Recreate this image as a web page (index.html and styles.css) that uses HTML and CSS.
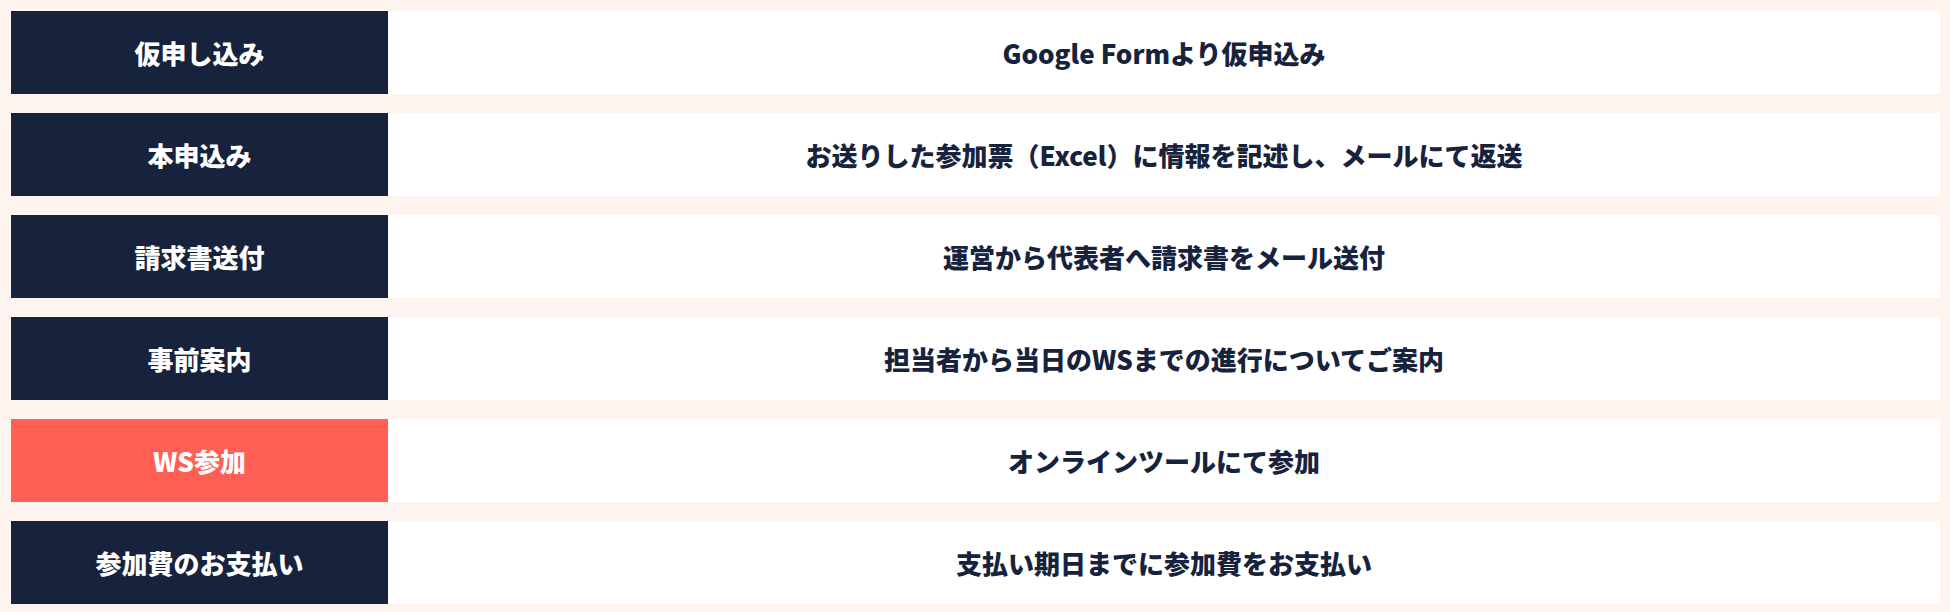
FILE: index.html
```html
<!DOCTYPE html>
<html lang="ja">
<head>
<meta charset="utf-8">
<title>参加の流れ</title>
<link rel="stylesheet" href="styles.css">
</head>
<body>
<div class="flow">
  <div class="row">
    <div class="label">仮申し込み</div>
    <div class="desc">Google Formより仮申込み</div>
  </div>
  <div class="row">
    <div class="label">本申込み</div>
    <div class="desc">お送りした参加票（Excel）に情報を記述し、メールにて返送</div>
  </div>
  <div class="row">
    <div class="label">請求書送付</div>
    <div class="desc">運営から代表者へ請求書をメール送付</div>
  </div>
  <div class="row">
    <div class="label">事前案内</div>
    <div class="desc">担当者から当日のWSまでの進行についてご案内</div>
  </div>
  <div class="row">
    <div class="label label-accent">WS参加</div>
    <div class="desc">オンラインツールにて参加</div>
  </div>
  <div class="row">
    <div class="label">参加費のお支払い</div>
    <div class="desc">支払い期日までに参加費をお支払い</div>
  </div>
</div>
</body>
</html>
```

FILE: styles.css
```css
html, body {
  margin: 0;
  padding: 0;
}
body {
  background: #fef4ef;
  font-family: "Noto Sans CJK JP", "Noto Sans", sans-serif;
  font-weight: 900;
  font-size: 26px;
  color: #17233d;
}
.flow {
  display: flex;
  flex-direction: column;
  gap: 19px;
  padding: 11px 10px 0 11px;
}
.row {
  display: flex;
  height: 83px;
}
.label {
  width: 377px;
  flex: none;
  background: #17233d;
  color: #ffffff;
  display: flex;
  align-items: center;
  justify-content: center;
}
.label-accent {
  background: #ff5f55;
}
.desc {
  flex: 1;
  background: #ffffff;
  display: flex;
  align-items: center;
  justify-content: center;
}
```
